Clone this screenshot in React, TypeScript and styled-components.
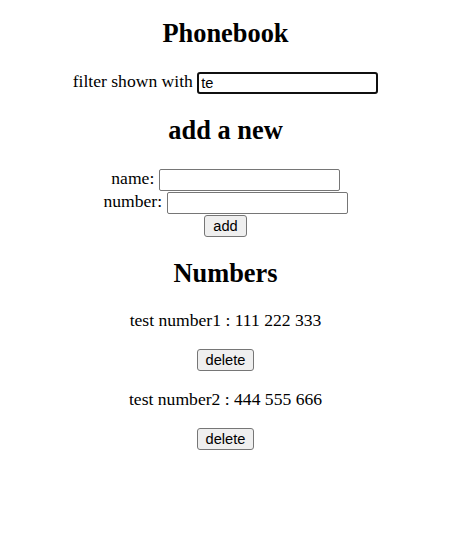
import styled, { createGlobalStyle } from 'styled-components';

interface Person {
  id: number;
  name: string;
  number: string;
}

const persons: Person[] = [
  { id: 1, name: 'test number1', number: '111 222 333' },
  { id: 2, name: 'test number2', number: '444 555 666' },
];

const GlobalStyle = createGlobalStyle`
  body {
    margin: 0;
    font-family: "Liberation Serif", "Times New Roman", serif;
    font-size: 17.6px;
    color: #000;
    background: #fff;
  }
`;

const Page = styled.div`
  text-align: center;
  padding: 18px 8px 40px;
`;

const Title = styled.h2<{ $first?: boolean }>`
  font-size: 26.4px;
  font-weight: bold;
  line-height: 30px;
  margin: ${(p) => (p.$first ? '0' : '22px')} 0 22px;
`;

const Row = styled.div`
  line-height: 23px;
  height: 23px;
`;

const TextInput = styled.input<{ $focused?: boolean }>`
  font: 14.67px "Liberation Sans", Arial, sans-serif;
  color: #000;
  box-sizing: border-box;
  width: 181px;
  height: 22px;
  margin: 0;
  vertical-align: middle;
  padding: ${(p) => (p.$focused ? '0 2px' : '1px 3px')};
  border: ${(p) => (p.$focused ? '2px solid #101010' : '1px solid #767676')};
  border-radius: ${(p) => (p.$focused ? '3px' : '2px')};
  outline: none;
`;

const Button = styled.button`
  font: 14.67px "Liberation Sans", Arial, sans-serif;
  color: #000;
  box-sizing: border-box;
  height: 22px;
  padding: 0 8px;
  margin: 0;
  vertical-align: middle;
  border: 1px solid #767676;
  border-radius: 3px;
  background: #efefef;
`;

const Entry = styled.p`
  margin: 18px 0 19px;
  line-height: 20px;
`;

const Item = styled.div`
  display: flex;
  justify-content: center;
`;

const App = () => {
  return (
    <Page>
      <GlobalStyle />
      <Title $first>Phonebook</Title>
      <Row>
        filter shown with <TextInput $focused defaultValue="te" />
      </Row>
      <Title>add a new</Title>
      <form onSubmit={(e) => e.preventDefault()}>
        <Row>
          name: <TextInput />
        </Row>
        <Row>
          number: <TextInput />
        </Row>
        <Row>
          <Button type="submit">add</Button>
        </Row>
      </form>
      <Title>Numbers</Title>
      {persons.map((person) => (
        <div key={person.id}>
          <Entry>
            {person.name} : {person.number}
          </Entry>
          <Item>
            <Button>delete</Button>
          </Item>
        </div>
      ))}
    </Page>
  );
};

export default App;
